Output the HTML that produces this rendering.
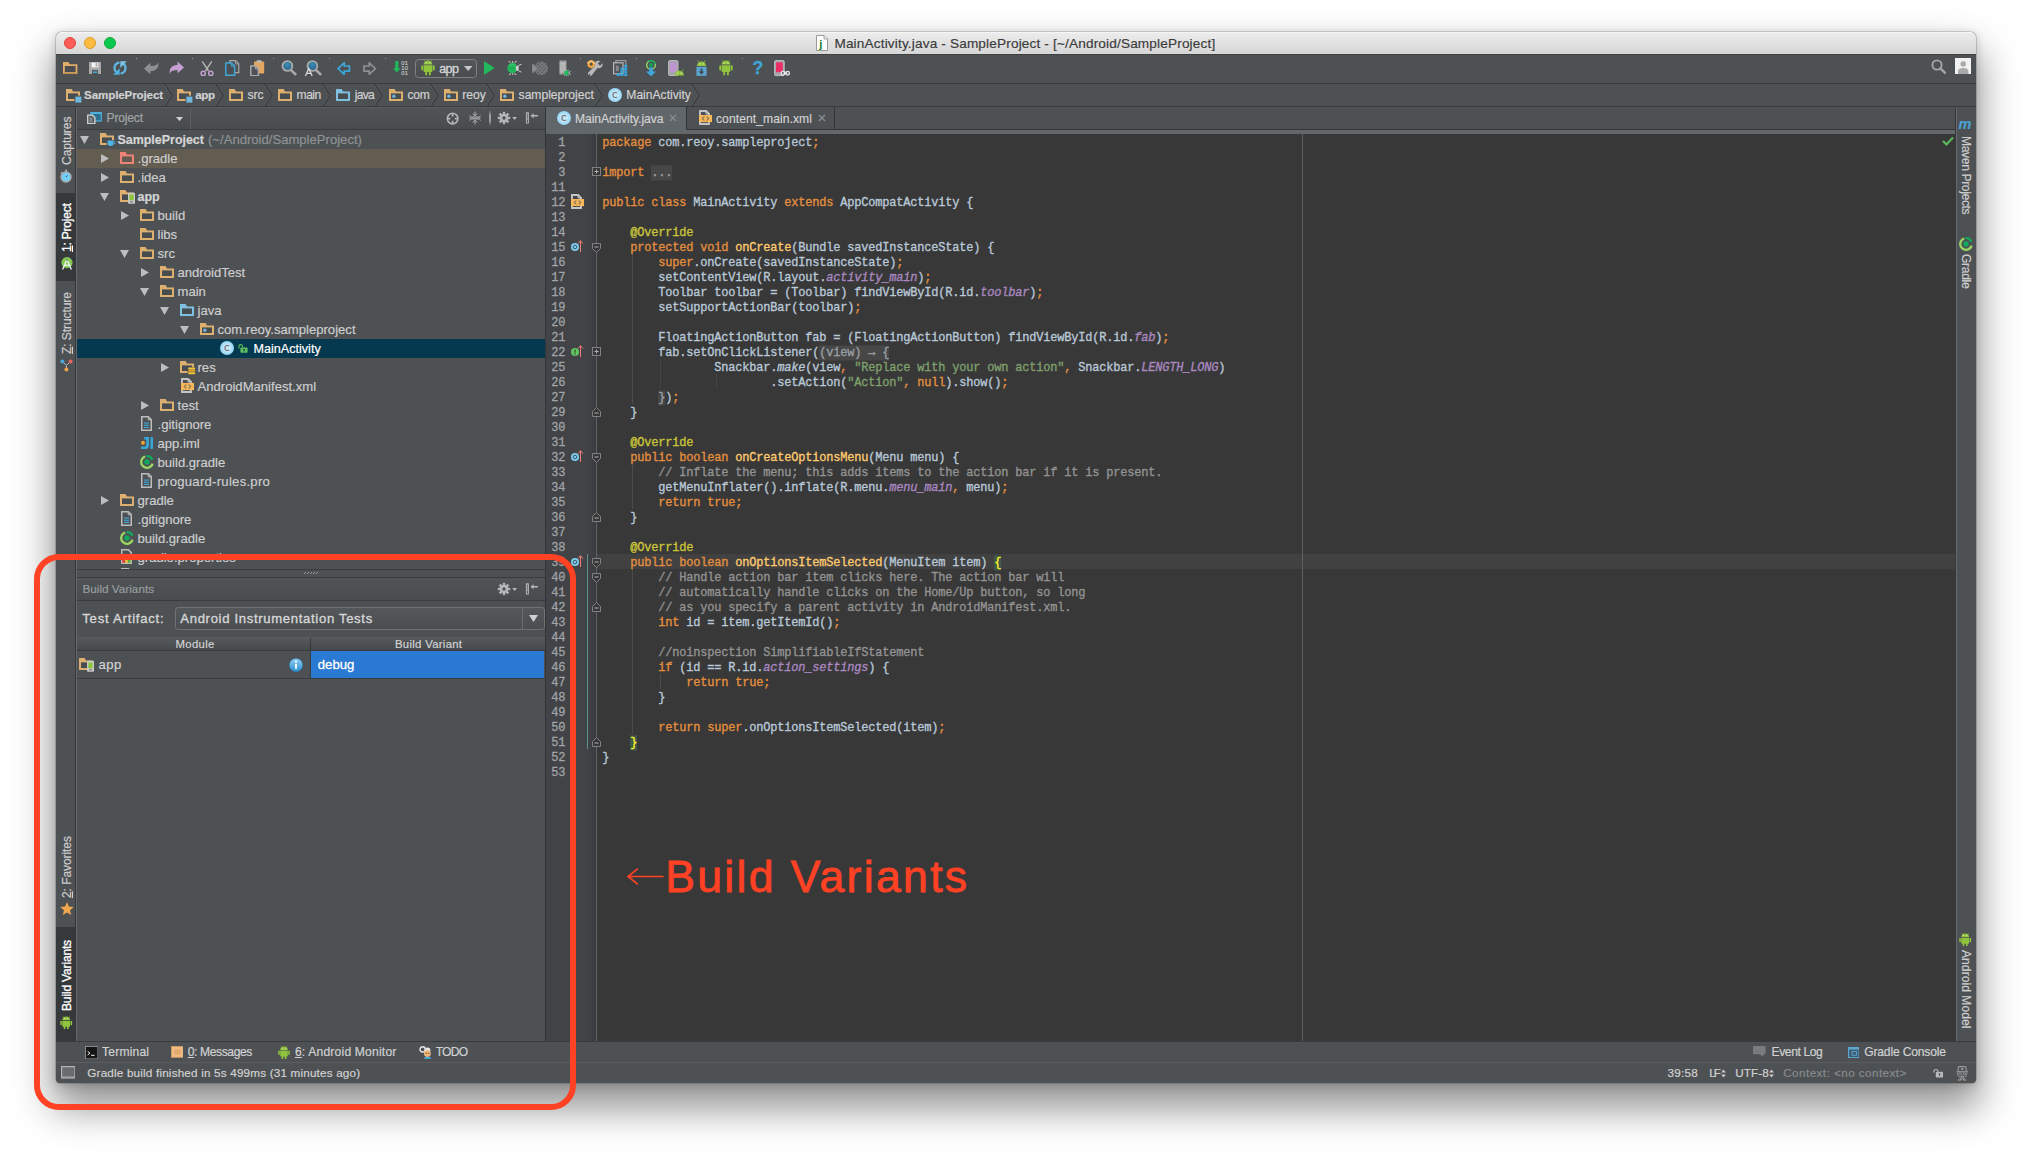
<!DOCTYPE html>
<html><head><meta charset="utf-8"><title>MainActivity.java - SampleProject</title>
<style>
html,body{margin:0;padding:0;background:#fff;}
body{width:2032px;height:1163px;overflow:hidden;position:relative;font-family:"Liberation Sans",sans-serif;}
div,span,svg{position:absolute;box-sizing:border-box;}
.t{white-space:pre;line-height:1;-webkit-text-stroke:0.18px;}
.t span,.c span{position:static;}
.m{font-family:"Liberation Mono",monospace;}
.c{white-space:pre;font-family:"Liberation Mono",monospace;font-size:12px;letter-spacing:-0.2px;line-height:15px;height:15px;color:#bac9d8;transform-origin:0 50%;transform:scaleY(1.08);-webkit-text-stroke:0.32px;}
.k{color:#e58f3e}.s{color:#7fa06d}.cm{color:#939393}.an{color:#cbc53a}.f{color:#aa88c0;font-style:italic}.fn{color:#ffcb6e}
.ln{white-space:pre;font-family:"Liberation Mono",monospace;font-size:12px;letter-spacing:-0.2px;line-height:15px;height:15px;color:#a2a5a7;text-align:right;width:30px;transform-origin:100% 50%;transform:scaleY(1.08);-webkit-text-stroke:0.25px;}
.v{white-space:pre;line-height:1;transform-origin:0 0;-webkit-text-stroke:0.18px;}
u{text-decoration:underline;text-underline-offset:1px;}
</style></head><body>
<!-- parts_chrome -->
<div style="left:56px;top:31.5px;width:1920px;height:1051.5px;background:#4d5154;border-radius:5px 5px 4px 4px;box-shadow:0 22px 38px 4px rgba(0,0,0,0.42),0 0 0 0.5px rgba(0,0,0,0.28),0 2px 10px rgba(0,0,0,0.18);"></div>
<div style="left:56px;top:31.5px;width:1920px;height:22.5px;border-radius:5px 5px 0 0;background:linear-gradient(#ececec,#d6d6d6);border-top:1px solid #f6f6f6;"></div>
<div style="left:64px;top:37px;width:12px;height:12px;background:#fd5c58;border-radius:50%;border:0.5px solid #df423f;"></div>
<div style="left:84px;top:37px;width:12px;height:12px;background:#fdbc3f;border-radius:50%;border:0.5px solid #dd9d27;"></div>
<div style="left:104px;top:37px;width:12px;height:12px;background:#0bc84f;border-radius:50%;border:0.5px solid #11a93d;"></div>
<svg style="left:816px;top:35px;" width="12" height="16" viewBox="0 0 12 16"><path d="M0.5 0.5H8L11.5 4V15.5H0.5Z" fill="#fdfdfd" stroke="#9a9a9a" stroke-width="1"/><path d="M8 0.5V4H11.5" fill="#e4e4e4" stroke="#9a9a9a" stroke-width="0.8"/><text x="3.2" y="12.6" font-family="Liberation Sans" font-weight="bold" font-size="11" fill="#0b7a1a">j</text></svg>
<div class="t" style="left:834.4px;top:36.70px;font-size:13.6px;color:#3c3c3c;letter-spacing:0.162px;">MainActivity.java - SampleProject - [~/Android/SampleProject]</div>
<div style="left:56px;top:54px;width:1920px;height:1px;background:#3e4143;"></div>
<div style="left:56px;top:83px;width:1920px;height:1px;background:#393c3e;"></div>
<div style="left:56px;top:106px;width:1920px;height:1px;background:#393c3e;"></div>
<div style="left:56px;top:1041px;width:1920px;height:1px;background:#393c3e;"></div>
<div style="left:56px;top:1062px;width:1920px;height:1px;background:#5b5e60;"></div>
<svg style="left:63px;top:62px;" width="15" height="12" viewBox="0 0 15 12"><path d="M0 0H5.2L7 2.2H14.4V12H0Z" fill="#e0ac68"/><rect x="1.8" y="4" width="10.8" height="6.2" fill="#4a4e52"/><rect x="0" y="11" width="14.4" height="1" fill="#c98f4a"/></svg>
<svg style="left:89px;top:62px;" width="12" height="12" viewBox="0 0 12 12"><path d="M0 0H12V12H0Z" fill="#a9a9a9"/><rect x="2.6" y="0.6" width="6.8" height="4.8" fill="#f4f4f4"/><rect x="6.6" y="1" width="1.6" height="3.6" fill="#a9a9a9"/><rect x="3" y="8" width="6" height="4" fill="#55585b"/><rect x="4" y="9.4" width="4" height="1.6" fill="#3fa6d6"/></svg>
<svg style="left:113px;top:61px;" width="14" height="14" viewBox="0 0 14 14"><path d="M6.4 1.3Q1.3 2.4 1.5 7.4Q1.7 9.7 3.5 11.3" fill="none" stroke="#5fb6e2" stroke-width="2.3"/><path d="M0.2 13.7H6.7V7.3Z" fill="#4eaee0"/><path d="M7.6 12.7Q12.7 11.6 12.5 6.6Q12.3 4.3 10.5 2.7" fill="none" stroke="#5fb6e2" stroke-width="2.3"/><path d="M13.8 0.3H7.3V6.7Z" fill="#7cc4e8"/></svg>
<div style="left:136px;top:58px;width:1px;height:1px;background:#9a9d9f;"></div>
<svg style="left:144px;top:62px;" width="15" height="13" viewBox="0 0 15 13"><path d="M0 6.6L6.4 0.8V4Q13.6 4 14.4 0Q15.4 8.6 6.4 9.2V12.4Z" fill="#8d8f91"/></svg>
<svg style="left:168.5px;top:61px;" width="15" height="13" viewBox="0 0 15 13"><g transform="translate(15,13) scale(-1,-1)"><path d="M0 6.6L6.4 0.8V4Q13.6 4 14.4 0Q15.4 8.6 6.4 9.2V12.4Z" fill="#c79fd4"/></g></svg>
<div style="left:192px;top:58px;width:1px;height:1px;background:#9a9d9f;"></div>
<svg style="left:200px;top:60.5px;" width="14" height="15.5" viewBox="0 0 14 15.5"><path d="M2.2 0.4L8.6 10M11.8 0.4L5.4 10" stroke="#b4b4b4" stroke-width="1.4" fill="none"/><circle cx="3.2" cy="12.4" r="2.1" fill="none" stroke="#c79fd4" stroke-width="1.5"/><circle cx="10.8" cy="12.4" r="2.1" fill="none" stroke="#c79fd4" stroke-width="1.5"/></svg>
<svg style="left:225px;top:60px;" width="14.5" height="16" viewBox="0 0 14.5 16"><path d="M4.8 0.6H10.6L13.8 3.8V12.6H4.8Z" fill="none" stroke="#a9a9a9" stroke-width="1.2"/><path d="M10.4 0.8V4H13.6" fill="none" stroke="#a9a9a9" stroke-width="0.9"/><path d="M0.8 3H6.6L9.6 6V15.2H0.8Z" fill="#4b5054" stroke="#3fa6d6" stroke-width="1.5"/><path d="M6.4 3.2V6.2H9.4" fill="none" stroke="#3fa6d6" stroke-width="1"/></svg>
<svg style="left:250px;top:59.5px;" width="14.5" height="16.5" viewBox="0 0 14.5 16.5"><rect x="4" y="1.6" width="10.2" height="12" rx="0.8" fill="#e2a660"/><rect x="6.6" y="0.2" width="5" height="2.4" rx="0.6" fill="#bdbdbd"/><path d="M0.8 6H5.6L8.4 8.8V15.8H0.8Z" fill="#4d5154" stroke="#a9a9a9" stroke-width="1.5"/><path d="M5.4 6.2V9H8.2" fill="none" stroke="#a9a9a9" stroke-width="1"/></svg>
<div style="left:273px;top:58px;width:1px;height:1px;background:#9a9d9f;"></div>
<svg style="left:281px;top:59.6px;" width="16" height="16" viewBox="0 0 16 16"><defs><radialGradient id="lens1" cx="0.5" cy="0.35" r="0.7"><stop offset="0" stop-color="#3c8cb6"/><stop offset="1" stop-color="#265d7c"/></radialGradient></defs><path d="M9.6 9.6L14.4 14.2" stroke="#a9a9a9" stroke-width="2.6" stroke-linecap="round"/><circle cx="6.4" cy="6" r="4.9" fill="url(#lens1)" stroke="#a9a9a9" stroke-width="1.9"/></svg>
<svg style="left:306px;top:59.6px;overflow:visible;" width="16" height="16" viewBox="0 0 16 16"><defs><radialGradient id="lens2" cx="0.5" cy="0.35" r="0.7"><stop offset="0" stop-color="#3c8cb6"/><stop offset="1" stop-color="#265d7c"/></radialGradient></defs><path d="M9.6 9.6L14.4 14.2" stroke="#a9a9a9" stroke-width="2.6" stroke-linecap="round"/><circle cx="6.4" cy="6" r="4.9" fill="url(#lens2)" stroke="#a9a9a9" stroke-width="1.9"/><path d="M-0.6 16L2.8 8.4L6.2 16M0.7 13.4H4.9" fill="none" stroke="#d6d6d6" stroke-width="1.3"/></svg>
<div style="left:329px;top:58px;width:1px;height:1px;background:#9a9d9f;"></div>
<svg style="left:337px;top:62px;" width="14" height="13.4" viewBox="0 0 14 13.4"><path d="M1 6.6L7.2 0.8V4H12.4V9.2H7.2V12.4Z" fill="none" stroke="#3fa6d6" stroke-width="1.7" stroke-linejoin="miter"/></svg>
<svg style="left:363px;top:62px;" width="14" height="13.4" viewBox="0 0 14 13.4"><g transform="translate(13.4,0) scale(-1,1)"><path d="M1 6.6L7.2 0.8V4H12.4V9.2H7.2V12.4Z" fill="none" stroke="#8d8f91" stroke-width="1.7" stroke-linejoin="miter"/></g></svg>
<div style="left:385px;top:58px;width:1px;height:1px;background:#9a9d9f;"></div>
<svg style="left:393px;top:60.5px;" width="15" height="15" viewBox="0 0 15 15"><path d="M2.2 0H5.4V7.2H7.6L3.8 11.6L0 7.2H2.2Z" fill="#20b85a"/></svg>
<div class="t" style="left:401.3px;top:60.70px;font-size:5.8px;color:#c4c4c4;letter-spacing:0.2px;">01</div>
<div class="t" style="left:401.3px;top:65.70px;font-size:5.8px;color:#c4c4c4;letter-spacing:0.2px;">10</div>
<div class="t" style="left:401.3px;top:70.70px;font-size:5.8px;color:#c4c4c4;letter-spacing:0.2px;">01</div>
<div style="left:415px;top:59px;width:62px;height:19px;border:1px solid #7e8284;border-radius:3.5px;background:linear-gradient(#53575a,#484c4f);"></div>
<svg style="left:421px;top:60px;" width="14" height="15.5" viewBox="0 0 14 15.5"><path d="M2.6 4.6A4.4 4.2 0 0 1 11.4 4.6Z" fill="#8fc43c"/><path d="M4.2 1.6L3.3 0.2M9.8 1.6L10.7 0.2" stroke="#8fc43c" stroke-width="0.7"/><circle cx="5.1" cy="2.9" r="0.6" fill="#e6efd2"/><circle cx="8.9" cy="2.9" r="0.6" fill="#e6efd2"/><path d="M2.6 5.2H11.4V11.2Q11.4 12 10.6 12H3.4Q2.6 12 2.6 11.2Z" fill="#8fc43c"/><rect x="0.3" y="5.2" width="1.8" height="5.2" rx="0.9" fill="#8fc43c"/><rect x="11.9" y="5.2" width="1.8" height="5.2" rx="0.9" fill="#8fc43c"/><rect x="4.2" y="11" width="1.9" height="4.4" rx="0.9" fill="#8fc43c"/><rect x="7.9" y="11" width="1.9" height="4.4" rx="0.9" fill="#8fc43c"/></svg>
<div class="t" style="left:439.3px;top:63.30px;font-size:12.6px;color:#d6d6d6;-webkit-text-stroke:0.3px #d6d6d6;letter-spacing:-0.711px;">app</div>
<svg style="left:464px;top:66.2px;" width="8.4" height="5" viewBox="0 0 8.4 5"><path d="M0 0H8.4L4.2 5Z" fill="#c8c8c8"/></svg>
<svg style="left:484px;top:61.4px;" width="11" height="14" viewBox="0 0 11 14"><path d="M0 0L10.6 7L0 14Z" fill="#20b85a"/></svg>
<svg style="left:506.5px;top:61px;" width="15" height="14.4" viewBox="0 0 15 14.4"><path d="M1.4 0.4H2.6L3.8 2.4M5.6 0L5.6 2.2M9.8 0.4H8.6L7.4 2.4M1.4 14H2.6L3.8 12M5.6 14.4L5.6 12.2M9.8 14H8.6L7.4 12" stroke="#d4d4d4" stroke-width="0.9" fill="none"/><path d="M14.4 3.4Q12 3.2 11.2 5.6M14.4 11Q12 11.2 11.2 8.8" stroke="#d0d0d0" stroke-width="1" fill="none"/><ellipse cx="5.4" cy="7.2" rx="5" ry="5.1" fill="#20b85a"/><path d="M0.6 7.2H9.6" stroke="#169a4a" stroke-width="0.6"/><path d="M1.6 4.4Q5 2.6 8.6 4" stroke="#4fd68a" stroke-width="0.9" fill="none" opacity="0.6"/><ellipse cx="10.2" cy="7.2" rx="1.5" ry="2.8" fill="#cfcfcf"/></svg>
<svg style="left:531.6px;top:60.6px;" width="16.4" height="15" viewBox="0 0 16.4 15"><defs><pattern id="hat" width="2.8" height="2.8" patternUnits="userSpaceOnUse" patternTransform="rotate(45 0 0)"><rect width="2.8" height="2.8" fill="#808386"/><rect x="0.3" y="0.3" width="1.7" height="1.7" fill="#505457"/></pattern></defs><circle cx="9.2" cy="7.4" r="6.9" fill="url(#hat)"/><path d="M0.2 2.2L5.6 7.4L0.2 12.6Z" fill="#8c8f91"/></svg>
<svg style="left:558.6px;top:59.6px;" width="12" height="16" viewBox="0 0 12 16"><rect x="0.4" y="0.4" width="7" height="14.2" rx="1" fill="#a6a8aa"/><rect x="1.7" y="2.8" width="4.4" height="9.4" fill="#cdcdcd"/><rect x="2.2" y="3.4" width="3.9" height="8.8" fill="#b4b4b4"/><circle cx="3.9" cy="1.6" r="0.5" fill="#555"/><circle cx="3.9" cy="13.5" r="0.6" fill="#666"/><rect x="5.3" y="10.5" width="4.4" height="4.8" rx="1.2" fill="#20b85a"/><path d="M11.6 11.4Q10 11.6 10 12.9Q10 14.2 11.6 14.4" stroke="#d4d4d4" stroke-width="0.9" fill="none"/><path d="M5.4 10.2h0.8M7.1 10.2h0.8M8.8 10.2h0.8M5.4 15.6h0.8M7.1 15.6h0.8M8.8 15.6h0.8" stroke="#e4e4e4" stroke-width="0.8"/></svg>
<div style="left:580px;top:58px;width:1px;height:1px;background:#9a9d9f;"></div>
<svg style="left:586.6px;top:60.2px;" width="17" height="16" viewBox="0 0 17 16"><path d="M15.6 3.2L13 5.8L10.8 3.6L13.4 1Q10.4 0 8.6 2Q7.2 3.8 8 5.8L1.6 12.2Q0.4 13.6 1.2 15L2.6 13.8L3.6 14.8L2.6 16Q4 16.2 5 15L10.4 8Q12.6 8.8 14.4 7.2Q16.2 5.4 15.6 3.2Z" fill="#b9b9b9"/><path d="M4.2 -0.2L7.9 1.9V6.3L4.2 8.4L0.5 6.3V1.9Z" fill="#efa43e"/><path d="M4.2 -0.2L7.9 1.9V4.1H0.5V1.9Z" fill="#f6bb62"/><circle cx="4.2" cy="4.1" r="1.6" fill="#4d5154"/></svg>
<svg style="left:612.8px;top:59.6px;" width="15" height="16.4" viewBox="0 0 15 16.4"><rect x="2.8" y="0.6" width="10" height="9" fill="none" stroke="#9a9c9e" stroke-width="1.2"/><rect x="0.6" y="2.8" width="9.4" height="11" fill="#4d5154" stroke="#b8b8b8" stroke-width="1.2"/><rect x="2.8" y="5.6" width="3" height="5.6" fill="#85888a"/><rect x="3.6" y="13.5" width="3" height="2.5" fill="#35a7e0"/><rect x="7.4" y="13.5" width="3" height="2.5" fill="#35a7e0"/><rect x="7.4" y="10.6" width="3" height="2.5" fill="#35a7e0"/><rect x="7.4" y="7.7" width="3" height="2.5" fill="#35a7e0"/><rect x="11.2" y="13.5" width="3" height="2.5" fill="#35a7e0"/><rect x="11.2" y="10.6" width="3" height="2.5" fill="#35a7e0"/><rect x="11.2" y="7.7" width="3" height="2.5" fill="#35a7e0"/><rect x="11.2" y="4.8" width="3" height="2.5" fill="#35a7e0"/></svg>
<div style="left:636px;top:58px;width:1px;height:1px;background:#9a9d9f;"></div>
<svg style="left:644px;top:59.6px;" width="14" height="16.8" viewBox="0 0 14 16.8"><circle cx="7" cy="5" r="4.3" fill="none" stroke="#8fd36a" stroke-width="1.5"/><path d="M4.6 1.4A4.3 4.3 0 0 1 11.2 4" fill="none" stroke="#12a55a" stroke-width="1.5"/><circle cx="7" cy="5" r="2" fill="#12a55a"/><path d="M5 7.4H9V11.4H12L7 16.6L2 11.4H5Z" fill="#3fa6d6"/></svg>
<svg style="left:667.6px;top:60px;" width="17" height="16.4" viewBox="0 0 17 16.4"><rect x="0.6" y="0.6" width="9.4" height="15" rx="1.2" fill="#a3a5a7" stroke="#c6c6c6" stroke-width="0.9"/><rect x="2" y="2.6" width="6.6" height="9.6" fill="#c194d4"/><g transform="translate(6.4,9.4)"><rect x="-0.6" y="-0.8" width="11.2" height="8" fill="#4d5154" opacity="0"/><path d="M0.4 6A4.6 4.6 0 0 1 9.6 6Z" fill="#8fc43c"/><path d="M2.4 2.4L1.4 0.4M7.6 2.4L8.6 0.4" stroke="#8fc43c" stroke-width="0.8"/><circle cx="3.2" cy="3.8" r="0.65" fill="#e6efd2"/><circle cx="6.8" cy="3.8" r="0.65" fill="#e6efd2"/></g></svg>
<svg style="left:695.6px;top:59.6px;" width="11" height="16.4" viewBox="0 0 11 16.4"><g transform="translate(0.5,0)"><path d="M0.4 6A4.6 4.6 0 0 1 9.6 6Z" fill="#8fc43c"/><path d="M2.4 2.4L1.4 0.4M7.6 2.4L8.6 0.4" stroke="#8fc43c" stroke-width="0.8"/><circle cx="3.2" cy="3.8" r="0.65" fill="#e6efd2"/><circle cx="6.8" cy="3.8" r="0.65" fill="#e6efd2"/></g><rect x="0.4" y="6.8" width="10.2" height="9" fill="#5da3cf"/><path d="M4.6 8.4H6.4V11.4H8.4L5.5 14.6L2.6 11.4H4.6Z" fill="#3b4a55"/></svg>
<svg style="left:719px;top:60.2px;" width="14" height="15.5" viewBox="0 0 14 15.5"><path d="M2.6 4.6A4.4 4.2 0 0 1 11.4 4.6Z" fill="#8fc43c"/><path d="M4.2 1.6L3.3 0.2M9.8 1.6L10.7 0.2" stroke="#8fc43c" stroke-width="0.7"/><circle cx="5.1" cy="2.9" r="0.6" fill="#e6efd2"/><circle cx="8.9" cy="2.9" r="0.6" fill="#e6efd2"/><path d="M2.6 5.2H11.4V11.2Q11.4 12 10.6 12H3.4Q2.6 12 2.6 11.2Z" fill="#8fc43c"/><rect x="0.3" y="5.2" width="1.8" height="5.2" rx="0.9" fill="#8fc43c"/><rect x="11.9" y="5.2" width="1.8" height="5.2" rx="0.9" fill="#8fc43c"/><rect x="4.2" y="11" width="1.9" height="4.4" rx="0.9" fill="#8fc43c"/><rect x="7.9" y="11" width="1.9" height="4.4" rx="0.9" fill="#8fc43c"/></svg>
<div style="left:742px;top:58px;width:1px;height:1px;background:#9a9d9f;"></div>
<div class="t" style="left:752.4px;top:60.25px;font-size:17.5px;color:#3fa6d6;font-weight:bold;-webkit-text-stroke:0.3px #3fa6d6;">?</div>
<svg style="left:773.6px;top:60px;" width="17" height="16.6" viewBox="0 0 17 16.6"><rect x="0.6" y="0.6" width="9.6" height="15" rx="1.2" fill="#a3a5a7" stroke="#c6c6c6" stroke-width="0.9"/><rect x="2" y="2.4" width="6.8" height="9.8" fill="#ee2c68"/><circle cx="9" cy="13.2" r="1.9" fill="#777" stroke="#f2f2f2" stroke-width="1.1"/><circle cx="13.6" cy="13.2" r="1.9" fill="#777" stroke="#f2f2f2" stroke-width="1.1"/><rect x="9.6" y="12.5" width="3.4" height="1.4" fill="#f2f2f2"/></svg>
<svg style="left:1931px;top:59.4px;" width="16" height="15.4" viewBox="0 0 16 15.4"><path d="M9.4 9.4L14 13.8" stroke="#a4a6a8" stroke-width="2.4" stroke-linecap="round"/><circle cx="6" cy="6" r="4.6" fill="none" stroke="#a4a6a8" stroke-width="1.9"/></svg>
<svg style="left:1955px;top:58.2px;" width="16.4" height="16" viewBox="0 0 16.4 16"><rect width="16.4" height="16" fill="#f1f1f1"/><circle cx="8.2" cy="6" r="2.7" fill="#a9a9a9"/><path d="M3 16V13.4Q3 10 8.2 10Q13.4 10 13.4 13.4V16Z" fill="#a9a9a9"/></svg>
<svg style="left:66px;top:89px;" width="16" height="14" viewBox="0 0 16 14"><path d="M0 0H5.6L7 2.4H14V12H0Z" fill="#deb06f"/><rect x="2" y="4.4" width="10" height="5.6" fill="#474c50"/><rect x="8.4" y="6.6" width="7" height="7" fill="#4d5154"/><rect x="9.4" y="7.6" width="6" height="6" fill="#6fb7dc"/></svg>
<div class="t" style="left:84.1px;top:89.20px;font-size:11.6px;color:#d2d2d2;font-weight:bold;letter-spacing:-0.132px;">SampleProject</div>
<svg style="left:163.5px;top:83.5px;" width="9" height="23" viewBox="0 0 9 23"><path d="M0.5 0L8 11.5L0.5 23" fill="none" stroke="#37393b" stroke-width="1.1"/><path d="M-0.7 0L6.8 11.5L-0.7 23" fill="none" stroke="#5a5e61" stroke-width="0.8"/></svg>
<svg style="left:177.3px;top:89px;" width="16" height="14" viewBox="0 0 16 14"><path d="M0 0H5.6L7 2.4H14V12H0Z" fill="#deb06f"/><rect x="2" y="4.4" width="10" height="5.6" fill="#474c50"/><rect x="8.4" y="6.6" width="7" height="7" fill="#4d5154"/><rect x="9.4" y="7.6" width="6" height="6" fill="#6fb7dc"/></svg>
<div class="t" style="left:195.2px;top:89.20px;font-size:11.6px;color:#d2d2d2;font-weight:bold;letter-spacing:-0.411px;">app</div>
<svg style="left:214.5px;top:83.5px;" width="9" height="23" viewBox="0 0 9 23"><path d="M0.5 0L8 11.5L0.5 23" fill="none" stroke="#37393b" stroke-width="1.1"/><path d="M-0.7 0L6.8 11.5L-0.7 23" fill="none" stroke="#5a5e61" stroke-width="0.8"/></svg>
<svg style="left:229.2px;top:89px;" width="14" height="12" viewBox="0 0 14 12"><path d="M0 0H5.6L7 2.4H14V12H0Z" fill="#deb06f"/><rect x="2" y="4.4" width="10" height="5.6" fill="#474c50"/></svg>
<div class="t" style="left:247.6px;top:88.95px;font-size:12.1px;color:#d2d2d2;letter-spacing:-0.115px;">src</div>
<svg style="left:263.9px;top:83.5px;" width="9" height="23" viewBox="0 0 9 23"><path d="M0.5 0L8 11.5L0.5 23" fill="none" stroke="#37393b" stroke-width="1.1"/><path d="M-0.7 0L6.8 11.5L-0.7 23" fill="none" stroke="#5a5e61" stroke-width="0.8"/></svg>
<svg style="left:278.2px;top:89px;" width="14" height="12" viewBox="0 0 14 12"><path d="M0 0H5.6L7 2.4H14V12H0Z" fill="#deb06f"/><rect x="2" y="4.4" width="10" height="5.6" fill="#474c50"/></svg>
<div class="t" style="left:296.6px;top:88.95px;font-size:12.1px;color:#d2d2d2;letter-spacing:-0.542px;">main</div>
<svg style="left:321.6px;top:83.5px;" width="9" height="23" viewBox="0 0 9 23"><path d="M0.5 0L8 11.5L0.5 23" fill="none" stroke="#37393b" stroke-width="1.1"/><path d="M-0.7 0L6.8 11.5L-0.7 23" fill="none" stroke="#5a5e61" stroke-width="0.8"/></svg>
<svg style="left:336.3px;top:89px;" width="14" height="12" viewBox="0 0 14 12"><path d="M0 0H5.6L7 2.4H14V12H0Z" fill="#7ec0e2"/><rect x="2" y="4.4" width="10" height="5.6" fill="#474c50"/></svg>
<div class="t" style="left:354.7px;top:88.95px;font-size:12.1px;color:#d2d2d2;letter-spacing:-0.699px;">java</div>
<svg style="left:374.4px;top:83.5px;" width="9" height="23" viewBox="0 0 9 23"><path d="M0.5 0L8 11.5L0.5 23" fill="none" stroke="#37393b" stroke-width="1.1"/><path d="M-0.7 0L6.8 11.5L-0.7 23" fill="none" stroke="#5a5e61" stroke-width="0.8"/></svg>
<svg style="left:388.7px;top:89px;" width="14" height="12" viewBox="0 0 14 12"><path d="M0 0H5.6L7 2.4H14V12H0Z" fill="#deb06f"/><rect x="2" y="4.4" width="10" height="5.6" fill="#474c50"/><circle cx="4.9" cy="7.2" r="1.7" fill="#6db5dd"/></svg>
<div class="t" style="left:407.6px;top:88.95px;font-size:12.1px;color:#d2d2d2;letter-spacing:-0.279px;">com</div>
<svg style="left:429.7px;top:83.5px;" width="9" height="23" viewBox="0 0 9 23"><path d="M0.5 0L8 11.5L0.5 23" fill="none" stroke="#37393b" stroke-width="1.1"/><path d="M-0.7 0L6.8 11.5L-0.7 23" fill="none" stroke="#5a5e61" stroke-width="0.8"/></svg>
<svg style="left:444.1px;top:89px;" width="14" height="12" viewBox="0 0 14 12"><path d="M0 0H5.6L7 2.4H14V12H0Z" fill="#deb06f"/><rect x="2" y="4.4" width="10" height="5.6" fill="#474c50"/><circle cx="4.9" cy="7.2" r="1.7" fill="#6db5dd"/></svg>
<div class="t" style="left:462.3px;top:88.95px;font-size:12.1px;color:#d2d2d2;letter-spacing:-0.013px;">reoy</div>
<svg style="left:485.8px;top:83.5px;" width="9" height="23" viewBox="0 0 9 23"><path d="M0.5 0L8 11.5L0.5 23" fill="none" stroke="#37393b" stroke-width="1.1"/><path d="M-0.7 0L6.8 11.5L-0.7 23" fill="none" stroke="#5a5e61" stroke-width="0.8"/></svg>
<svg style="left:500px;top:89px;" width="14" height="12" viewBox="0 0 14 12"><path d="M0 0H5.6L7 2.4H14V12H0Z" fill="#deb06f"/><rect x="2" y="4.4" width="10" height="5.6" fill="#474c50"/><circle cx="4.9" cy="7.2" r="1.7" fill="#6db5dd"/></svg>
<div class="t" style="left:518.6px;top:88.95px;font-size:12.1px;color:#d2d2d2;letter-spacing:-0.002px;">sampleproject</div>
<svg style="left:593.7px;top:83.5px;" width="9" height="23" viewBox="0 0 9 23"><path d="M0.5 0L8 11.5L0.5 23" fill="none" stroke="#37393b" stroke-width="1.1"/><path d="M-0.7 0L6.8 11.5L-0.7 23" fill="none" stroke="#5a5e61" stroke-width="0.8"/></svg>
<svg style="left:607.8px;top:88px;" width="14" height="14" viewBox="0 0 14 14"><defs><radialGradient id="cg1" cx="0.5" cy="0.5" r="0.5"><stop offset="0.45" stop-color="#c3e8fa"/><stop offset="1" stop-color="#92d3f3"/></radialGradient></defs><circle cx="7" cy="7" r="7" fill="url(#cg1)"/><path d="M9.2 5.2Q8.4 4.5 7.2 4.5Q4.9 4.5 4.9 7Q4.9 9.5 7.2 9.5Q8.4 9.5 9.2 8.8" fill="none" stroke="#75676c" stroke-width="1.05"/></svg>
<div class="t" style="left:626.3px;top:88.95px;font-size:12.1px;color:#d2d2d2;letter-spacing:0.005px;">MainActivity</div>
<svg style="left:690.8px;top:83.5px;" width="9" height="23" viewBox="0 0 9 23"><path d="M0.5 0L8 11.5L0.5 23" fill="none" stroke="#37393b" stroke-width="1.1"/><path d="M-0.7 0L6.8 11.5L-0.7 23" fill="none" stroke="#5a5e61" stroke-width="0.8"/></svg>
<svg style="left:85px;top:1046px;" width="13.4" height="13.4" viewBox="0 0 13.4 13.4"><rect x="0.5" y="0.5" width="12.4" height="12.4" fill="#151515" stroke="#8a8a8a" stroke-width="1"/><path d="M2.6 5.4L5 7.2L2.6 9" fill="none" stroke="#f0f0f0" stroke-width="1"/><rect x="6" y="8.8" width="3.6" height="1" fill="#f0f0f0"/></svg>
<div class="t" style="left:102.1px;top:1046.45px;font-size:12.1px;color:#d2d2d2;letter-spacing:0.168px;">Terminal</div>
<svg style="left:170.6px;top:1046.4px;" width="12.8" height="11.8" viewBox="0 0 12.8 11.8"><rect x="0.5" y="0.5" width="11.8" height="10.8" fill="#f1bd84" stroke="#c79a66" stroke-width="1"/><rect x="3" y="3.4" width="6.6" height="5" fill="#e2a86c"/></svg>
<div class="t" style="left:187.7px;top:1046.45px;font-size:12.1px;color:#d2d2d2;letter-spacing:-0.390px;"><u>0</u>: Messages</div>
<svg style="left:278.2px;top:1045.6px;" width="12" height="13.6" viewBox="0 0 14 15.5"><path d="M2.6 4.6A4.4 4.2 0 0 1 11.4 4.6Z" fill="#8fc43c"/><path d="M4.2 1.6L3.3 0.2M9.8 1.6L10.7 0.2" stroke="#8fc43c" stroke-width="0.7"/><circle cx="5.1" cy="2.9" r="0.6" fill="#e6efd2"/><circle cx="8.9" cy="2.9" r="0.6" fill="#e6efd2"/><path d="M2.6 5.2H11.4V11.2Q11.4 12 10.6 12H3.4Q2.6 12 2.6 11.2Z" fill="#8fc43c"/><rect x="0.3" y="5.2" width="1.8" height="5.2" rx="0.9" fill="#8fc43c"/><rect x="11.9" y="5.2" width="1.8" height="5.2" rx="0.9" fill="#8fc43c"/><rect x="4.2" y="11" width="1.9" height="4.4" rx="0.9" fill="#8fc43c"/><rect x="7.9" y="11" width="1.9" height="4.4" rx="0.9" fill="#8fc43c"/></svg>
<div class="t" style="left:294.9px;top:1046.45px;font-size:12.1px;color:#d2d2d2;letter-spacing:0.194px;"><u>6</u>: Android Monitor</div>
<svg style="left:418.6px;top:1045.6px;" width="14" height="13.6" viewBox="0 0 14 13.6"><circle cx="3.6" cy="3.4" r="2.6" fill="none" stroke="#e8e8e8" stroke-width="1.4"/><circle cx="8.6" cy="4.4" r="2.8" fill="#e6e6e6"/><circle cx="8.4" cy="7.6" r="3.4" fill="#f3b77a"/><rect x="5.4" y="11" width="6.4" height="2.4" rx="0.8" fill="#3fa6d6"/><rect x="6.6" y="6.8" width="1.4" height="1" fill="#6a4a2a"/><rect x="9" y="6.8" width="1.4" height="1" fill="#6a4a2a"/></svg>
<div class="t" style="left:435.7px;top:1046.45px;font-size:12.1px;color:#d2d2d2;letter-spacing:-0.745px;">TODO</div>
<svg style="left:1752.6px;top:1046.4px;" width="13" height="11" viewBox="0 0 13 11"><path d="M1 0H11.4Q12.6 0 12.6 1.2V7Q12.6 8.2 11.4 8.2H10.6L10.2 10.8L7 8.2H1Q0 8.2 0 7V1.2Q0 0 1 0Z" fill="#797c7f"/></svg>
<div class="t" style="left:1771.5px;top:1046.15px;font-size:12.1px;color:#d2d2d2;letter-spacing:-0.399px;">Event Log</div>
<svg style="left:1847.6px;top:1047px;" width="11.6" height="11.2" viewBox="0 0 11.6 11.2"><rect x="0.6" y="0.6" width="10.4" height="10" fill="#3d5a6c" stroke="#5aa6d0" stroke-width="1.2"/><rect x="0.6" y="0.6" width="10.4" height="2" fill="#5aa6d0"/><rect x="4" y="4.6" width="4.6" height="3.6" fill="none" stroke="#5aa6d0" stroke-width="1"/></svg>
<div class="t" style="left:1864.2px;top:1046.15px;font-size:12.1px;color:#d2d2d2;letter-spacing:-0.167px;">Gradle Console</div>
<svg style="left:60.6px;top:1066px;" width="14.6" height="13.4" viewBox="0 0 14.6 13.4"><rect x="0.6" y="0.6" width="13.4" height="10.6" fill="#6a6d6f" stroke="#b5b5b5" stroke-width="1.2"/><rect x="0" y="12.4" width="14.6" height="1" fill="#b5b5b5"/></svg>
<div class="t" style="left:87.3px;top:1066.95px;font-size:11.7px;color:#d2d2d2;letter-spacing:0.185px;">Gradle build finished in 5s 499ms (31 minutes ago)</div>
<div class="t" style="left:1667.4px;top:1067.15px;font-size:11.7px;color:#d2d2d2;letter-spacing:0.305px;">39:58</div>
<div class="t" style="left:1709.3px;top:1067.15px;font-size:11.7px;color:#d2d2d2;letter-spacing:-2.054px;">LF</div>
<svg style="left:1721.4px;top:1068.6px;" width="5" height="9" viewBox="0 0 5 9"><path d="M0 3.6L2.5 0.6L5 3.6ZM0 5.4L2.5 8.4L5 5.4Z" fill="#c6c6c6"/></svg>
<div class="t" style="left:1735.3px;top:1067.15px;font-size:11.7px;color:#d2d2d2;letter-spacing:0.063px;">UTF-8</div>
<svg style="left:1769.2px;top:1068.6px;" width="5" height="9" viewBox="0 0 5 9"><path d="M0 3.6L2.5 0.6L5 3.6ZM0 5.4L2.5 8.4L5 5.4Z" fill="#c6c6c6"/></svg>
<div class="t" style="left:1783.2px;top:1067.15px;font-size:11.7px;color:#888c8f;letter-spacing:0.441px;">Context: &lt;no context&gt;</div>
<svg style="left:1933px;top:1068.4px;" width="10.4" height="9.8" viewBox="0 0 10.4 9.8"><path d="M0.9 4.4V3.4Q0.9 1.5 2.9 1.5Q4.9 1.5 4.9 3.4V3.8" fill="none" stroke="#b9b9b9" stroke-width="1.2"/><rect x="2.8" y="3.7" width="7.4" height="5.9" rx="1" fill="#b9b9b9"/><path d="M5 5.4H8L7 6.4V8H6V6.4Z" fill="#4d5154"/></svg>
<svg style="left:1956.2px;top:1066.2px;" width="12.4" height="14.4" viewBox="0 0 12.4 14.4"><path d="M2.2 5.4V2Q2.2 0.6 3.6 0.6H8.8Q10.2 0.6 10.2 2V5.4" fill="none" stroke="#9a9d9f" stroke-width="1.1"/><rect x="5.2" y="2" width="2" height="2" fill="#9a9d9f"/><rect x="0.4" y="5.2" width="11.6" height="1.2" fill="#9a9d9f"/><circle cx="4.2" cy="8" r="1.2" fill="none" stroke="#9a9d9f" stroke-width="0.8"/><circle cx="8.2" cy="8" r="1.2" fill="none" stroke="#9a9d9f" stroke-width="0.8"/><path d="M1.4 7Q2 12 6.2 12.4Q10.4 12 11 7" fill="none" stroke="#9a9d9f" stroke-width="0.9"/><ellipse cx="6.2" cy="10.6" rx="1.8" ry="0.9" fill="#9a9d9f"/><path d="M2 14H5.2L4.6 12.6M10.4 14H7.2L7.8 12.6" fill="none" stroke="#b0b0b0" stroke-width="1"/></svg>
<!-- parts_strips -->
<div style="left:75px;top:107px;width:1px;height:934px;background:#35383a;"></div>
<div style="left:76px;top:107px;width:1px;height:934px;background:#66696c;"></div>
<div style="left:56px;top:193px;width:19px;height:88px;background:#35393b;"></div>
<div style="left:56px;top:927px;width:19px;height:114px;background:#35393b;"></div>
<div class="v" style="left:61.36px;top:164.5px;font-size:12.1px;color:#cecece;transform:rotate(-90deg);letter-spacing:-0.085px;">Captures</div>
<div class="v" style="left:61.36px;top:252px;font-size:12.1px;color:#ffffff;transform:rotate(-90deg);-webkit-text-stroke:0.3px #fff;letter-spacing:-0.235px;"><u>1</u>: Project</div>
<div class="v" style="left:61.36px;top:354px;font-size:12.1px;color:#cecece;transform:rotate(-90deg);letter-spacing:-0.110px;"><u>Z</u>: Structure</div>
<div class="v" style="left:61.36px;top:898px;font-size:12.1px;color:#cecece;transform:rotate(-90deg);letter-spacing:-0.110px;"><u>2</u>: Favorites</div>
<div class="v" style="left:61.36px;top:1011.2px;font-size:12.1px;color:#ffffff;transform:rotate(-90deg);-webkit-text-stroke:0.3px #fff;letter-spacing:-0.197px;">Build Variants</div>
<svg style="left:59.4px;top:168.5px;" width="14" height="15" viewBox="0 0 14 15"><rect x="6.3" y="0.6" width="1.6" height="2.6" fill="#b8b8b8"/><path d="M2 3.2L3.6 4.8" stroke="#b8b8b8" stroke-width="1.3"/><circle cx="7" cy="8" r="5" fill="#6fd0f8" stroke="#a9abad" stroke-width="1.5"/><path d="M7 8.2L8.4 6.4" stroke="#4a5560" stroke-width="1"/></svg>
<svg style="left:59.6px;top:256px;" width="14" height="14.5" viewBox="0 0 14 14.5"><circle cx="7" cy="6.6" r="5.6" fill="#84c955"/><path d="M7 3.2L2.6 13.4M7 3.2L11.4 13.4" stroke="#f4f4f4" stroke-width="1.3"/><path d="M4.6 9.8Q7 8.4 9.4 9.8" fill="none" stroke="#f4f4f4" stroke-width="1.1"/><circle cx="7" cy="4" r="1.1" fill="#6d8a5d"/></svg>
<svg style="left:60px;top:359.4px;" width="13" height="13" viewBox="0 0 13 13"><path d="M2.4 2.6L6.4 6.4L10.6 2.6M6.4 6.4V10.6" stroke="#b9b9b9" stroke-width="1" fill="none"/><circle cx="2.4" cy="2.6" r="2" fill="#4aa8dc"/><circle cx="10.6" cy="2.6" r="2" fill="#e9655f"/><circle cx="6.4" cy="10.6" r="2" fill="#f0a24a"/></svg>
<svg style="left:59.8px;top:901.8px;" width="14" height="13.4" viewBox="0 0 14 13.4"><path d="M7 0L8.9 4.6L13.8 5L10 8.2L11.2 13L7 10.4L2.8 13L4 8.2L0.2 5L5.1 4.6Z" fill="#f0a74e"/></svg>
<svg style="left:60.4px;top:1015.6px;" width="12.4" height="13.8" viewBox="0 0 14 15.5"><path d="M2.6 4.6A4.4 4.2 0 0 1 11.4 4.6Z" fill="#8fc43c"/><path d="M4.2 1.6L3.3 0.2M9.8 1.6L10.7 0.2" stroke="#8fc43c" stroke-width="0.7"/><circle cx="5.1" cy="2.9" r="0.6" fill="#e6efd2"/><circle cx="8.9" cy="2.9" r="0.6" fill="#e6efd2"/><path d="M2.6 5.2H11.4V11.2Q11.4 12 10.6 12H3.4Q2.6 12 2.6 11.2Z" fill="#8fc43c"/><rect x="0.3" y="5.2" width="1.8" height="5.2" rx="0.9" fill="#8fc43c"/><rect x="11.9" y="5.2" width="1.8" height="5.2" rx="0.9" fill="#8fc43c"/><rect x="4.2" y="11" width="1.9" height="4.4" rx="0.9" fill="#8fc43c"/><rect x="7.9" y="11" width="1.9" height="4.4" rx="0.9" fill="#8fc43c"/></svg>
<div style="left:1955px;top:107px;width:1px;height:934px;background:#35383a;"></div>
<div style="left:1956px;top:107px;width:1px;height:934px;background:#686b6e;"></div>
<div class="v" style="left:1972.14px;top:136px;font-size:12.1px;color:#cecece;transform:rotate(90deg);letter-spacing:-0.361px;">Maven Projects</div>
<div class="v" style="left:1972.14px;top:254px;font-size:12.1px;color:#cecece;transform:rotate(90deg);letter-spacing:-0.324px;">Gradle</div>
<div class="v" style="left:1972.14px;top:950px;font-size:12.1px;color:#cecece;transform:rotate(90deg);letter-spacing:0.040px;">Android Model</div>
<div class="t" style="left:1958.6px;top:116.75px;font-size:14.5px;color:#4aa0cf;font-weight:bold;font-style:italic;">m</div>
<svg style="left:1958.6px;top:236.6px;" width="14" height="14" viewBox="0 0 14 14"><path d="M12.6 8.6A5.8 5.8 0 1 1 5.2 1.5" fill="none" stroke="#9bd564" stroke-width="2.3"/><path d="M6.4 1.2A5.8 5.8 0 0 1 12.4 4.9" fill="none" stroke="#11a85c" stroke-width="2.3"/><circle cx="7" cy="7" r="2.7" fill="#11a85c"/></svg>
<svg style="left:1959.4px;top:932.6px;" width="12.4" height="13.8" viewBox="0 0 14 15.5"><path d="M2.6 4.6A4.4 4.2 0 0 1 11.4 4.6Z" fill="#8fc43c"/><path d="M4.2 1.6L3.3 0.2M9.8 1.6L10.7 0.2" stroke="#8fc43c" stroke-width="0.7"/><circle cx="5.1" cy="2.9" r="0.6" fill="#e6efd2"/><circle cx="8.9" cy="2.9" r="0.6" fill="#e6efd2"/><path d="M2.6 5.2H11.4V11.2Q11.4 12 10.6 12H3.4Q2.6 12 2.6 11.2Z" fill="#8fc43c"/><rect x="0.3" y="5.2" width="1.8" height="5.2" rx="0.9" fill="#8fc43c"/><rect x="11.9" y="5.2" width="1.8" height="5.2" rx="0.9" fill="#8fc43c"/><rect x="4.2" y="11" width="1.9" height="4.4" rx="0.9" fill="#8fc43c"/><rect x="7.9" y="11" width="1.9" height="4.4" rx="0.9" fill="#8fc43c"/></svg>
<!-- parts_tree -->
<div style="left:77px;top:129px;width:468px;height:1px;background:#393c3e;"></div>
<div style="left:545px;top:107px;width:1px;height:934px;background:#323537;"></div>
<div style="left:77px;top:107px;width:468px;height:22px;background:linear-gradient(#505457,#484c4e);"></div>
<div style="left:77px;top:107px;width:468px;height:1px;background:#585c5f;"></div>
<div class="t" style="left:106.6px;top:111.95px;font-size:12.1px;color:#a2a6a9;letter-spacing:-0.193px;">Project</div>
<div style="left:190px;top:108px;width:1px;height:21px;background:#5c6063;"></div>
<svg style="left:86.8px;top:111.8px;" width="15" height="12.4" viewBox="0 0 15 12.4"><rect x="3.9" y="0.6" width="10.4" height="8.4" fill="#2c6f8f" stroke="#4fb0dc" stroke-width="1.2"/><rect x="3.9" y="0.6" width="10.4" height="1.4" fill="#4fb0dc"/><path d="M0.7 3.2H5.6L7.9 5.5V11.7H0.7Z" fill="#5c6063" stroke="#d2d2d2" stroke-width="1.3"/><rect x="2.6" y="5.6" width="2.6" height="4.6" fill="#85888a"/></svg>
<svg style="left:175.6px;top:117px;" width="7" height="4.2" viewBox="0 0 7 4.2"><path d="M0 0H7L3.5 4.2Z" fill="#d0d0d0"/></svg>
<svg style="left:446.4px;top:111.5px;" width="13.2" height="13.2" viewBox="0 0 13.2 13.2"><circle cx="6.6" cy="6.6" r="5.3" fill="none" stroke="#b4b4b4" stroke-width="1.6"/><path d="M6.6 1.6V4.4M6.6 8.8V11.6M1.6 6.6H4.4M8.8 6.6H11.6" stroke="#b4b4b4" stroke-width="1.8"/></svg>
<svg style="left:468.6px;top:111px;" width="12" height="14" viewBox="0 0 12 14"><rect x="0.6" y="5.3" width="10.8" height="3.4" fill="#8f9294"/><path d="M6 0.6V4.6M3.8 2.6L6 4.8L8.2 2.6M6 13.4V9.4M3.8 11.4L6 9.2L8.2 11.4" fill="none" stroke="#b4b4b4" stroke-width="1"/><path d="M0.4 4.4L1.4 5.3M11.6 4.4L10.6 5.3M0.4 9.6L1.4 8.7M11.6 9.6L10.6 8.7" stroke="#b4b4b4" stroke-width="0.8"/></svg>
<div style="left:489px;top:109.5px;width:2px;height:16px;background:linear-gradient(rgba(150,153,155,0),rgba(165,168,170,0.9) 35%,rgba(165,168,170,0.9) 65%,rgba(150,153,155,0));"></div>
<svg style="left:497px;top:111px;" width="20" height="14" viewBox="0 0 20 14"><rect x="10.80" y="5.80" width="2.4" height="2.4" transform="rotate(0 12.00 7.00)" fill="#b6b6b6"/><rect x="9.34" y="9.34" width="2.4" height="2.4" transform="rotate(45 10.54 10.54)" fill="#b6b6b6"/><rect x="5.80" y="10.80" width="2.4" height="2.4" transform="rotate(90 7.00 12.00)" fill="#b6b6b6"/><rect x="2.26" y="9.34" width="2.4" height="2.4" transform="rotate(135 3.46 10.54)" fill="#b6b6b6"/><rect x="0.80" y="5.80" width="2.4" height="2.4" transform="rotate(180 2.00 7.00)" fill="#b6b6b6"/><rect x="2.26" y="2.26" width="2.4" height="2.4" transform="rotate(225 3.46 3.46)" fill="#b6b6b6"/><rect x="5.80" y="0.80" width="2.4" height="2.4" transform="rotate(270 7.00 2.00)" fill="#b6b6b6"/><rect x="9.34" y="2.26" width="2.4" height="2.4" transform="rotate(315 10.54 3.46)" fill="#b6b6b6"/><circle cx="7" cy="7" r="4.2" fill="#b6b6b6"/><circle cx="7" cy="7" r="1.7" fill="#4d5154"/><path d="M15.2 6.1H20L17.6 8.9Z" fill="#b6b6b6"/></svg>
<svg style="left:525px;top:111.2px;" width="14" height="14" viewBox="0 0 14 14"><rect x="0.9" y="1.2" width="3" height="11.4" rx="0.6" fill="#b6b6b6"/><rect x="1.9" y="2.4" width="1" height="5.6" fill="#6b6e70"/><rect x="1.9" y="8.6" width="1" height="3" fill="#4d5154"/><path d="M5.4 4.7L8.6 2.2V4H13V5.4H8.6V7.2Z" fill="#b6b6b6"/></svg>
<div style="left:77px;top:130px;width:468px;height:439px;overflow:hidden;">
<svg style="left:3px;top:5.5px;" width="9" height="8" viewBox="0 0 9 8"><path d="M0 0H9L4.5 8Z" fill="#bdbdbd"/></svg>
<svg style="left:23px;top:3px;" width="16" height="14" viewBox="0 0 16 14"><path d="M0 0H5.6L7 2.4H14V12H0Z" fill="#deb06f"/><rect x="2" y="4.4" width="10" height="5.6" fill="#474c50"/><rect x="6.6" y="7" width="8.4" height="6.4" fill="#4d5154"/><path d="M7.6 7.6H13.4V10.5Q13.4 13 10.5 13Q7.6 13 7.6 10.5Z" fill="#4fb4e6"/><path d="M13.2 8.4Q15.4 8.4 15.2 9.8Q15 11 13 11" stroke="#4fb4e6" stroke-width="0.9" fill="none"/></svg>
<div class="t" style="left:40.5px;top:3.78px;font-size:12.45px;color:#d6d6d6;font-weight:bold;">SampleProject</div>
<div class="t" style="left:131px;top:2.95px;font-size:13.1px;color:#8f9395;">(~/Android/SampleProject)</div>
<div style="left:0px;top:19px;width:468px;height:19px;background:#625d50;"></div>
<svg style="left:24px;top:24px;" width="8" height="9" viewBox="0 0 8 9"><path d="M0 0L8 4.5L0 9Z" fill="#bdbdbd"/></svg>
<svg style="left:43px;top:21.8px;" width="14" height="12" viewBox="0 0 14 12"><path d="M0 0H5.6L7 2.4H14V12H0Z" fill="#f18277"/><rect x="2" y="4.4" width="10" height="5.6" fill="#625d50"/></svg>
<div class="t" style="left:60.5px;top:21.95px;font-size:13.1px;color:#cecece;">.gradle</div>
<svg style="left:24px;top:43px;" width="8" height="9" viewBox="0 0 8 9"><path d="M0 0L8 4.5L0 9Z" fill="#bdbdbd"/></svg>
<svg style="left:43px;top:40.8px;" width="14" height="12" viewBox="0 0 14 12"><path d="M0 0H5.6L7 2.4H14V12H0Z" fill="#deb06f"/><rect x="2" y="4.4" width="10" height="5.6" fill="#474c50"/></svg>
<div class="t" style="left:60.5px;top:40.95px;font-size:13.1px;color:#cecece;">.idea</div>
<svg style="left:23px;top:62.5px;" width="9" height="8" viewBox="0 0 9 8"><path d="M0 0H9L4.5 8Z" fill="#bdbdbd"/></svg>
<svg style="left:43px;top:59.8px;" width="16" height="14" viewBox="0 0 16 14"><path d="M0 0H5.6L7 2.4H14V12H0Z" fill="#deb06f"/><rect x="2" y="4.4" width="10" height="5.6" fill="#474c50"/><rect x="8" y="2.8" width="7" height="11" rx="1" fill="#c9c9c9"/><rect x="9.3" y="4.6" width="4.4" height="5.6" fill="#8cc43a"/><rect x="10.3" y="11.4" width="2.4" height="1" fill="#555"/></svg>
<div class="t" style="left:60.5px;top:60.77px;font-size:12.45px;color:#d6d6d6;font-weight:bold;">app</div>
<svg style="left:44px;top:81px;" width="8" height="9" viewBox="0 0 8 9"><path d="M0 0L8 4.5L0 9Z" fill="#bdbdbd"/></svg>
<svg style="left:63px;top:78.8px;" width="14" height="12" viewBox="0 0 14 12"><path d="M0 0H5.6L7 2.4H14V12H0Z" fill="#deb06f"/><rect x="2" y="4.4" width="10" height="5.6" fill="#474c50"/></svg>
<div class="t" style="left:80.5px;top:78.95px;font-size:13.1px;color:#cecece;">build</div>
<svg style="left:63px;top:97.8px;" width="14" height="12" viewBox="0 0 14 12"><path d="M0 0H5.6L7 2.4H14V12H0Z" fill="#deb06f"/><rect x="2" y="4.4" width="10" height="5.6" fill="#474c50"/></svg>
<div class="t" style="left:80.5px;top:97.95px;font-size:13.1px;color:#cecece;">libs</div>
<svg style="left:43px;top:119.5px;" width="9" height="8" viewBox="0 0 9 8"><path d="M0 0H9L4.5 8Z" fill="#bdbdbd"/></svg>
<svg style="left:63px;top:116.8px;" width="14" height="12" viewBox="0 0 14 12"><path d="M0 0H5.6L7 2.4H14V12H0Z" fill="#deb06f"/><rect x="2" y="4.4" width="10" height="5.6" fill="#474c50"/></svg>
<div class="t" style="left:80.5px;top:116.95px;font-size:13.1px;color:#cecece;">src</div>
<svg style="left:64px;top:138px;" width="8" height="9" viewBox="0 0 8 9"><path d="M0 0L8 4.5L0 9Z" fill="#bdbdbd"/></svg>
<svg style="left:83px;top:135.8px;" width="14" height="12" viewBox="0 0 14 12"><path d="M0 0H5.6L7 2.4H14V12H0Z" fill="#deb06f"/><rect x="2" y="4.4" width="10" height="5.6" fill="#474c50"/></svg>
<div class="t" style="left:100.5px;top:135.95px;font-size:13.1px;color:#cecece;">androidTest</div>
<svg style="left:63px;top:157.5px;" width="9" height="8" viewBox="0 0 9 8"><path d="M0 0H9L4.5 8Z" fill="#bdbdbd"/></svg>
<svg style="left:83px;top:154.8px;" width="14" height="12" viewBox="0 0 14 12"><path d="M0 0H5.6L7 2.4H14V12H0Z" fill="#deb06f"/><rect x="2" y="4.4" width="10" height="5.6" fill="#474c50"/></svg>
<div class="t" style="left:100.5px;top:154.95px;font-size:13.1px;color:#cecece;">main</div>
<svg style="left:83px;top:176.5px;" width="9" height="8" viewBox="0 0 9 8"><path d="M0 0H9L4.5 8Z" fill="#bdbdbd"/></svg>
<svg style="left:103px;top:173.8px;" width="14" height="12" viewBox="0 0 14 12"><path d="M0 0H5.6L7 2.4H14V12H0Z" fill="#7ec0e2"/><rect x="2" y="4.4" width="10" height="5.6" fill="#474c50"/></svg>
<div class="t" style="left:120.5px;top:173.95px;font-size:13.1px;color:#cecece;">java</div>
<svg style="left:103px;top:195.5px;" width="9" height="8" viewBox="0 0 9 8"><path d="M0 0H9L4.5 8Z" fill="#bdbdbd"/></svg>
<svg style="left:123px;top:192.8px;" width="14" height="12" viewBox="0 0 14 12"><path d="M0 0H5.6L7 2.4H14V12H0Z" fill="#deb06f"/><rect x="2" y="4.4" width="10" height="5.6" fill="#474c50"/><circle cx="4.9" cy="7.2" r="1.7" fill="#6db5dd"/></svg>
<div class="t" style="left:140.5px;top:192.95px;font-size:13.1px;color:#cecece;">com.reoy.sampleproject</div>
<div style="left:0px;top:209px;width:468px;height:19px;background:#04394f;"></div>
<svg style="left:143px;top:211.3px;" width="14" height="14" viewBox="0 0 14 14"><defs><radialGradient id="cg2" cx="0.5" cy="0.5" r="0.5"><stop offset="0.45" stop-color="#c3e8fa"/><stop offset="1" stop-color="#92d3f3"/></radialGradient></defs><circle cx="7" cy="7" r="7" fill="url(#cg2)"/><path d="M9.2 5.2Q8.4 4.5 7.2 4.5Q4.9 4.5 4.9 7Q4.9 9.5 7.2 9.5Q8.4 9.5 9.2 8.8" fill="none" stroke="#75676c" stroke-width="1.05"/></svg>
<svg style="left:161px;top:214px;" width="10" height="9" viewBox="0 0 10 9"><path d="M1 4.4V2.6Q1 0.6 2.8 0.6Q4.6 0.6 4.6 2.6V3.4" fill="none" stroke="#5fbf5f" stroke-width="1.1"/><rect x="2.4" y="3.6" width="7.2" height="5.2" rx="0.8" fill="#5fbf5f"/><path d="M4.6 5.2H7.4L6.5 6.2V7.6H5.5V6.2Z" fill="#0a3850"/></svg>
<div class="t" style="left:176.5px;top:212.70px;font-size:12.6px;color:#ffffff;">MainActivity</div>
<svg style="left:84px;top:233px;" width="8" height="9" viewBox="0 0 8 9"><path d="M0 0L8 4.5L0 9Z" fill="#bdbdbd"/></svg>
<svg style="left:103px;top:230.8px;" width="16" height="14" viewBox="0 0 16 14"><path d="M0 0H5.6L7 2.4H14V12H0Z" fill="#deb06f"/><rect x="2" y="4.4" width="10" height="5.6" fill="#474c50"/><rect x="7.6" y="6" width="8" height="7.6" fill="#4d5154"/><rect x="8.2" y="6.4" width="7" height="2" rx="0.6" fill="#f5c63c"/><rect x="8.2" y="8.8" width="7" height="2" rx="0.6" fill="#e0a820"/><rect x="8.2" y="11.2" width="7" height="2" rx="0.6" fill="#f5c63c"/></svg>
<div class="t" style="left:120.5px;top:230.95px;font-size:13.1px;color:#cecece;">res</div>
<svg style="left:104px;top:247.6px;" width="13" height="15" viewBox="0 0 13 15"><path d="M1 1H7.2L10 3.8V14H1Z" fill="none" stroke="#c4c4c4" stroke-width="1.9"/><path d="M7 1V4H10" fill="none" stroke="#c4c4c4" stroke-width="1"/><rect x="0" y="5" width="13" height="7.1" fill="#f8b85a"/><path d="M5.4 6.5L3.3 8.55L5.4 10.6M7.6 6.5L9.7 8.55L7.6 10.6" fill="none" stroke="#8f7a55" stroke-width="1.2"/></svg>
<div class="t" style="left:120.5px;top:249.95px;font-size:13.1px;color:#cecece;">AndroidManifest.xml</div>
<svg style="left:64px;top:271px;" width="8" height="9" viewBox="0 0 8 9"><path d="M0 0L8 4.5L0 9Z" fill="#bdbdbd"/></svg>
<svg style="left:83px;top:268.8px;" width="14" height="12" viewBox="0 0 14 12"><path d="M0 0H5.6L7 2.4H14V12H0Z" fill="#deb06f"/><rect x="2" y="4.4" width="10" height="5.6" fill="#474c50"/></svg>
<div class="t" style="left:100.5px;top:268.95px;font-size:13.1px;color:#cecece;">test</div>
<svg style="left:64px;top:286.2px;" width="11" height="15" viewBox="0 0 11 15"><path d="M0.75 0.75H7.4L10.25 3.6V14.25H0.75Z" fill="none" stroke="#bcbcbc" stroke-width="1.5"/><path d="M7.2 0.8V3.8H10.2" fill="none" stroke="#bcbcbc" stroke-width="1"/><rect x="3" y="6.5" width="5" height="1.1" fill="#3fa9d8"/><rect x="3" y="8.7" width="5" height="1.1" fill="#3fa9d8"/><rect x="3" y="10.9" width="5" height="1.1" fill="#3fa9d8"/></svg>
<div class="t" style="left:80.5px;top:287.95px;font-size:13.1px;color:#cecece;">.gitignore</div>
<svg style="left:64px;top:306.6px;" width="12" height="12" viewBox="0 0 12 12"><path d="M3.2 0H8V8.6Q8 12 4.4 12H0V9.4H3.8Q5.2 9.4 5.2 8V2.4H3.2Z" fill="#39a6d6"/><rect x="9.4" y="0" width="2.6" height="12" rx="0.8" fill="#39a6d6"/><circle cx="2" cy="5.8" r="2" fill="#f6a033"/></svg>
<div class="t" style="left:80.5px;top:306.95px;font-size:13.1px;color:#cecece;">app.iml</div>
<svg style="left:63px;top:324.6px;" width="14" height="14" viewBox="0 0 14 14"><path d="M12.6 8.6A5.8 5.8 0 1 1 5.2 1.5" fill="none" stroke="#9bd564" stroke-width="2.3"/><path d="M6.4 1.2A5.8 5.8 0 0 1 12.4 4.9" fill="none" stroke="#11a85c" stroke-width="2.3"/><circle cx="7" cy="7" r="2.7" fill="#11a85c"/></svg>
<div class="t" style="left:80.5px;top:325.95px;font-size:13.1px;color:#cecece;">build.gradle</div>
<svg style="left:64px;top:343.2px;" width="11" height="15" viewBox="0 0 11 15"><path d="M0.75 0.75H7.4L10.25 3.6V14.25H0.75Z" fill="none" stroke="#bcbcbc" stroke-width="1.5"/><path d="M7.2 0.8V3.8H10.2" fill="none" stroke="#bcbcbc" stroke-width="1"/><rect x="3" y="6.5" width="5" height="1.1" fill="#3fa9d8"/><rect x="3" y="8.7" width="5" height="1.1" fill="#3fa9d8"/><rect x="3" y="10.9" width="5" height="1.1" fill="#3fa9d8"/></svg>
<div class="t" style="left:80.5px;top:344.95px;font-size:13.1px;color:#cecece;letter-spacing:0.272px;">proguard-rules.pro</div>
<svg style="left:24px;top:366px;" width="8" height="9" viewBox="0 0 8 9"><path d="M0 0L8 4.5L0 9Z" fill="#bdbdbd"/></svg>
<svg style="left:43px;top:363.8px;" width="14" height="12" viewBox="0 0 14 12"><path d="M0 0H5.6L7 2.4H14V12H0Z" fill="#deb06f"/><rect x="2" y="4.4" width="10" height="5.6" fill="#474c50"/></svg>
<div class="t" style="left:60.5px;top:363.95px;font-size:13.1px;color:#cecece;">gradle</div>
<svg style="left:44px;top:381.2px;" width="11" height="15" viewBox="0 0 11 15"><path d="M0.75 0.75H7.4L10.25 3.6V14.25H0.75Z" fill="none" stroke="#bcbcbc" stroke-width="1.5"/><path d="M7.2 0.8V3.8H10.2" fill="none" stroke="#bcbcbc" stroke-width="1"/><rect x="3" y="6.5" width="5" height="1.1" fill="#3fa9d8"/><rect x="3" y="8.7" width="5" height="1.1" fill="#3fa9d8"/><rect x="3" y="10.9" width="5" height="1.1" fill="#3fa9d8"/></svg>
<div class="t" style="left:60.5px;top:382.95px;font-size:13.1px;color:#cecece;">.gitignore</div>
<svg style="left:43px;top:400.6px;" width="14" height="14" viewBox="0 0 14 14"><path d="M12.6 8.6A5.8 5.8 0 1 1 5.2 1.5" fill="none" stroke="#9bd564" stroke-width="2.3"/><path d="M6.4 1.2A5.8 5.8 0 0 1 12.4 4.9" fill="none" stroke="#11a85c" stroke-width="2.3"/><circle cx="7" cy="7" r="2.7" fill="#11a85c"/></svg>
<div class="t" style="left:60.5px;top:401.95px;font-size:13.1px;color:#cecece;">build.gradle</div>
<svg style="left:44px;top:419.2px;" width="11" height="15" viewBox="0 0 11 15"><path d="M0.75 0.75H7.4L10.25 3.6V14.25H0.75Z" fill="none" stroke="#bcbcbc" stroke-width="1.5"/><rect x="1" y="9" width="2.6" height="5" fill="#e34f45"/><rect x="4.2" y="7" width="2.6" height="7" fill="#f4c23a"/><rect x="7.4" y="9.6" width="2.6" height="4.4" fill="#6cc04a"/></svg>
<div class="t" style="left:60.5px;top:420.95px;font-size:13.1px;color:#cecece;">gradle.properties</div>
<svg style="left:44px;top:438.2px;" width="11" height="15" viewBox="0 0 11 15"><path d="M0.75 0.75H7.4L10.25 3.6V14.25H0.75Z" fill="none" stroke="#bcbcbc" stroke-width="1.5"/><path d="M7.2 0.8V3.8H10.2" fill="none" stroke="#bcbcbc" stroke-width="1"/><rect x="3" y="6.5" width="5" height="1.1" fill="#3fa9d8"/><rect x="3" y="8.7" width="5" height="1.1" fill="#3fa9d8"/><rect x="3" y="10.9" width="5" height="1.1" fill="#3fa9d8"/></svg>
<div class="t" style="left:60.5px;top:439.95px;font-size:13.1px;color:#cecece;">gradlew</div>
</div>
<div style="left:77px;top:569px;width:468px;height:1px;background:#393c3e;"></div>
<div style="left:77px;top:577px;width:468px;height:1px;background:#393c3e;"></div>
<div style="left:304px;top:572.5px;width:1px;height:1px;background:#9a9a9a;"></div>
<div style="left:305px;top:571.5px;width:1px;height:1px;background:#9a9a9a;"></div>
<div style="left:307px;top:572.5px;width:1px;height:1px;background:#9a9a9a;"></div>
<div style="left:308px;top:571.5px;width:1px;height:1px;background:#9a9a9a;"></div>
<div style="left:310px;top:572.5px;width:1px;height:1px;background:#9a9a9a;"></div>
<div style="left:311px;top:571.5px;width:1px;height:1px;background:#9a9a9a;"></div>
<div style="left:313px;top:572.5px;width:1px;height:1px;background:#9a9a9a;"></div>
<div style="left:314px;top:571.5px;width:1px;height:1px;background:#9a9a9a;"></div>
<div style="left:316px;top:572.5px;width:1px;height:1px;background:#9a9a9a;"></div>
<div style="left:317px;top:571.5px;width:1px;height:1px;background:#9a9a9a;"></div>
<!-- parts_variants -->
<div style="left:77px;top:578px;width:468px;height:22px;background:linear-gradient(#505457,#484c4e);"></div>
<div style="left:77px;top:600px;width:468px;height:1px;background:#393c3e;"></div>
<div class="t" style="left:82.5px;top:582.65px;font-size:11.7px;color:#999da0;letter-spacing:0.022px;">Build Variants</div>
<svg style="left:497px;top:582px;" width="20" height="14" viewBox="0 0 20 14"><rect x="10.80" y="5.80" width="2.4" height="2.4" transform="rotate(0 12.00 7.00)" fill="#b6b6b6"/><rect x="9.34" y="9.34" width="2.4" height="2.4" transform="rotate(45 10.54 10.54)" fill="#b6b6b6"/><rect x="5.80" y="10.80" width="2.4" height="2.4" transform="rotate(90 7.00 12.00)" fill="#b6b6b6"/><rect x="2.26" y="9.34" width="2.4" height="2.4" transform="rotate(135 3.46 10.54)" fill="#b6b6b6"/><rect x="0.80" y="5.80" width="2.4" height="2.4" transform="rotate(180 2.00 7.00)" fill="#b6b6b6"/><rect x="2.26" y="2.26" width="2.4" height="2.4" transform="rotate(225 3.46 3.46)" fill="#b6b6b6"/><rect x="5.80" y="0.80" width="2.4" height="2.4" transform="rotate(270 7.00 2.00)" fill="#b6b6b6"/><rect x="9.34" y="2.26" width="2.4" height="2.4" transform="rotate(315 10.54 3.46)" fill="#b6b6b6"/><circle cx="7" cy="7" r="4.2" fill="#b6b6b6"/><circle cx="7" cy="7" r="1.7" fill="#4d5154"/><path d="M15.2 6.1H20L17.6 8.9Z" fill="#b6b6b6"/></svg>
<svg style="left:525px;top:582px;" width="14" height="14" viewBox="0 0 14 14"><rect x="0.9" y="1.2" width="3" height="11.4" rx="0.6" fill="#b6b6b6"/><rect x="1.9" y="2.4" width="1" height="5.6" fill="#6b6e70"/><rect x="1.9" y="8.6" width="1" height="3" fill="#4d5154"/><path d="M5.4 4.7L8.6 2.2V4H13V5.4H8.6V7.2Z" fill="#b6b6b6"/></svg>
<div class="t" style="left:82.3px;top:612.45px;font-size:13.1px;color:#d6d6d6;-webkit-text-stroke:0.35px #d6d6d6;letter-spacing:0.773px;">Test Artifact:</div>
<div style="left:175px;top:607px;width:369.5px;height:23px;border:1px solid #6e7275;border-radius:3px;background:linear-gradient(#54585b,#4a4e51);"></div>
<div style="left:522px;top:608px;width:1px;height:21px;background:#6a6e71;"></div>
<div class="t" style="left:180.3px;top:611.95px;font-size:13.1px;color:#d6d6d6;-webkit-text-stroke:0.35px #d6d6d6;letter-spacing:0.676px;">Android Instrumentation Tests</div>
<svg style="left:528.5px;top:615px;" width="9" height="7" viewBox="0 0 9 7"><path d="M0 0H9L4.5 7Z" fill="#d0d0d0"/></svg>
<div style="left:77px;top:637px;width:468px;height:14px;background:linear-gradient(#575b5e,#45494c);border-bottom:1px solid #393c3e;"></div>
<div style="left:310px;top:638px;width:1px;height:12px;background:#35383a;"></div>
<div class="t" style="left:175.5px;top:639.35px;font-size:11.3px;color:#d4d4d4;letter-spacing:0.348px;">Module</div>
<div class="t" style="left:395px;top:639.35px;font-size:11.3px;color:#d4d4d4;letter-spacing:0.314px;">Build Variant</div>
<div style="left:311px;top:651px;width:232.8px;height:27px;background:#2a79d3;"></div>
<div style="left:310px;top:651px;width:1px;height:27px;background:#3a3d3f;"></div>
<div style="left:77px;top:678px;width:468px;height:1px;background:#393c3e;"></div>
<svg style="left:79px;top:658px;" width="16" height="14" viewBox="0 0 16 14"><path d="M0 0H5.6L7 2.4H14V12H0Z" fill="#deb06f"/><rect x="2" y="4.4" width="10" height="5.6" fill="#474c50"/><rect x="8" y="2.8" width="7" height="11" rx="1" fill="#c9c9c9"/><rect x="9.3" y="4.6" width="4.4" height="5.6" fill="#8cc43a"/><rect x="10.3" y="11.4" width="2.4" height="1" fill="#555"/></svg>
<div class="t" style="left:98.4px;top:657.95px;font-size:13.1px;color:#d4d4d4;letter-spacing:0.472px;">app</div>
<svg style="left:289px;top:658px;" width="14" height="14" viewBox="0 0 14 14"><defs><linearGradient id="ig" x1="0" y1="0" x2="0" y2="1"><stop offset="0" stop-color="#8fd0f2"/><stop offset="1" stop-color="#2f8fd0"/></linearGradient></defs><circle cx="7" cy="7" r="6.6" fill="url(#ig)" stroke="#2b7fb8" stroke-width="0.6"/><rect x="6.1" y="5.8" width="1.8" height="5" fill="#fff"/><circle cx="7" cy="3.7" r="1.1" fill="#fff"/></svg>
<div class="t" style="left:317.7px;top:657.95px;font-size:13.1px;color:#ffffff;-webkit-text-stroke:0.3px #fff;letter-spacing:0.068px;">debug</div>
<!-- parts_editor -->
<div style="left:546px;top:107px;width:140px;height:23px;background:#60666a;"></div>
<div style="left:686px;top:107px;width:1px;height:22px;background:#323537;"></div>
<div style="left:687px;top:107px;width:147px;height:22px;background:#4d5154;"></div>
<div style="left:834px;top:107px;width:1px;height:22px;background:#323537;"></div>
<div style="left:686px;top:129px;width:1269px;height:1px;background:#323537;"></div>
<div style="left:546px;top:130px;width:1409px;height:4px;background:#62676a;"></div>
<svg style="left:557px;top:111px;" width="14" height="14" viewBox="0 0 14 14"><defs><radialGradient id="cg3" cx="0.5" cy="0.5" r="0.5"><stop offset="0.45" stop-color="#c3e8fa"/><stop offset="1" stop-color="#92d3f3"/></radialGradient></defs><circle cx="7" cy="7" r="7" fill="url(#cg3)"/><path d="M9.2 5.2Q8.4 4.5 7.2 4.5Q4.9 4.5 4.9 7Q4.9 9.5 7.2 9.5Q8.4 9.5 9.2 8.8" fill="none" stroke="#75676c" stroke-width="1.05"/></svg>
<div class="t" style="left:575px;top:112.95px;font-size:12.1px;color:#d2d2d2;letter-spacing:-0.044px;">MainActivity.java</div>
<div class="t" style="left:668.6px;top:109.60px;font-size:15px;color:#8b8f91;">×</div>
<svg style="left:699px;top:109.6px;" width="13" height="15" viewBox="0 0 13 15"><path d="M1 1H7.2L10 3.8V14H1Z" fill="none" stroke="#c4c4c4" stroke-width="1.9"/><path d="M7 1V4H10" fill="none" stroke="#c4c4c4" stroke-width="1"/><rect x="0" y="5" width="13" height="7.1" fill="#f8b85a"/><path d="M5.4 6.5L3.3 8.55L5.4 10.6M7.6 6.5L9.7 8.55L7.6 10.6" fill="none" stroke="#8f7a55" stroke-width="1.2"/></svg>
<div class="t" style="left:716px;top:112.95px;font-size:12.1px;color:#d2d2d2;letter-spacing:0.078px;">content_main.xml</div>
<div class="t" style="left:817.6px;top:109.60px;font-size:15px;color:#8b8f91;">×</div>
<div style="left:546px;top:134px;width:1409px;height:907px;background:#383838;"></div>
<div style="left:546px;top:134px;width:50px;height:907px;background:linear-gradient(90deg,#414347 0,#414347 82%,#3b3c3f 100%);"></div>
<div style="left:597px;top:554px;width:1358px;height:15px;background:#414141;"></div>
<div style="left:1302px;top:134px;width:1px;height:907px;background:#5f5f5f;"></div>
<div style="left:596px;top:134px;width:1px;height:907px;background:#606366;"></div>
<div style="left:587px;top:554px;width:1px;height:195px;background:#5b918d;"></div>
<svg style="left:1942px;top:136px;" width="12" height="10" viewBox="0 0 12 10"><path d="M1 5L4.4 8.4L11 1.4" fill="none" stroke="#5cb85c" stroke-width="2.2"/></svg>
<div style="left:632px;top:254px;width:1px;height:150px;background:#4c4c4c;"></div>
<div style="left:660px;top:359px;width:1px;height:30px;background:#444444;"></div>
<div style="left:716px;top:374px;width:1px;height:15px;background:#444444;"></div>
<div style="left:632px;top:464px;width:1px;height:45px;background:#4c4c4c;"></div>
<div style="left:632px;top:569px;width:1px;height:165px;background:#4c4c4c;"></div>
<div style="left:660px;top:674px;width:1px;height:15px;background:#4c4c4c;"></div>
<div class="ln" style="left:535.3px;top:136px;">1</div>
<div class="c" style="left:602.2px;top:136px;"><span class="k">package </span>com.reoy.sampleproject<span class="k">;</span></div>
<div class="ln" style="left:535.3px;top:151px;">2</div>
<div class="ln" style="left:535.3px;top:166px;">3</div>
<div class="c" style="left:602.2px;top:166px;"><span class="k">import </span><span style="background:#474747;color:#9aa0a4;">...</span></div>
<div class="ln" style="left:535.3px;top:181px;">11</div>
<div class="ln" style="left:535.3px;top:196px;">12</div>
<div class="c" style="left:602.2px;top:196px;"><span class="k">public class </span>MainActivity <span class="k">extends </span>AppCompatActivity {</div>
<div class="ln" style="left:535.3px;top:211px;">13</div>
<div class="ln" style="left:535.3px;top:226px;">14</div>
<div class="c" style="left:602.2px;top:226px;">    <span class="an">@Override</span></div>
<div class="ln" style="left:535.3px;top:241px;">15</div>
<div class="c" style="left:602.2px;top:241px;">    <span class="k">protected void </span><span class="fn">onCreate</span>(Bundle savedInstanceState) {</div>
<div class="ln" style="left:535.3px;top:256px;">16</div>
<div class="c" style="left:602.2px;top:256px;">        <span class="k">super</span>.onCreate(savedInstanceState)<span class="k">;</span></div>
<div class="ln" style="left:535.3px;top:271px;">17</div>
<div class="c" style="left:602.2px;top:271px;">        setContentView(R.layout.<span class="f">activity_main</span>)<span class="k">;</span></div>
<div class="ln" style="left:535.3px;top:286px;">18</div>
<div class="c" style="left:602.2px;top:286px;">        Toolbar toolbar = (Toolbar) findViewById(R.id.<span class="f">toolbar</span>)<span class="k">;</span></div>
<div class="ln" style="left:535.3px;top:301px;">19</div>
<div class="c" style="left:602.2px;top:301px;">        setSupportActionBar(toolbar)<span class="k">;</span></div>
<div class="ln" style="left:535.3px;top:316px;">20</div>
<div class="ln" style="left:535.3px;top:331px;">21</div>
<div class="c" style="left:602.2px;top:331px;">        FloatingActionButton fab = (FloatingActionButton) findViewById(R.id.<span class="f">fab</span>)<span class="k">;</span></div>
<div class="ln" style="left:535.3px;top:346px;">22</div>
<div class="c" style="left:602.2px;top:346px;">        fab.setOnClickListener(<span style="background:#474747;color:#9aa0a4;">(view) → {</span></div>
<div class="ln" style="left:535.3px;top:361px;">25</div>
<div class="c" style="left:602.2px;top:361px;">                Snackbar.<span style="font-style:italic">make</span>(view<span class="k">, </span><span class="s">"Replace with your own action"</span><span class="k">, </span>Snackbar.<span class="f">LENGTH_LONG</span>)</div>
<div class="ln" style="left:535.3px;top:376px;">26</div>
<div class="c" style="left:602.2px;top:376px;">                        .setAction(<span class="s">"Action"</span><span class="k">, null</span>).show()<span class="k">;</span></div>
<div class="ln" style="left:535.3px;top:391px;">27</div>
<div class="c" style="left:602.2px;top:391px;">        <span style="background:#474747;color:#9aa0a4;">}</span>)<span class="k">;</span></div>
<div class="ln" style="left:535.3px;top:406px;">29</div>
<div class="c" style="left:602.2px;top:406px;">    }</div>
<div class="ln" style="left:535.3px;top:421px;">30</div>
<div class="ln" style="left:535.3px;top:436px;">31</div>
<div class="c" style="left:602.2px;top:436px;">    <span class="an">@Override</span></div>
<div class="ln" style="left:535.3px;top:451px;">32</div>
<div class="c" style="left:602.2px;top:451px;">    <span class="k">public boolean </span><span class="fn">onCreateOptionsMenu</span>(Menu menu) {</div>
<div class="ln" style="left:535.3px;top:466px;">33</div>
<div class="c" style="left:602.2px;top:466px;">        <span class="cm">// Inflate the menu; this adds items to the action bar if it is present.</span></div>
<div class="ln" style="left:535.3px;top:481px;">34</div>
<div class="c" style="left:602.2px;top:481px;">        getMenuInflater().inflate(R.menu.<span class="f">menu_main</span><span class="k">, </span>menu)<span class="k">;</span></div>
<div class="ln" style="left:535.3px;top:496px;">35</div>
<div class="c" style="left:602.2px;top:496px;">        <span class="k">return true;</span></div>
<div class="ln" style="left:535.3px;top:511px;">36</div>
<div class="c" style="left:602.2px;top:511px;">    }</div>
<div class="ln" style="left:535.3px;top:526px;">37</div>
<div class="ln" style="left:535.3px;top:541px;">38</div>
<div class="c" style="left:602.2px;top:541px;">    <span class="an">@Override</span></div>
<div class="ln" style="left:535.3px;top:556px;">39</div>
<div class="c" style="left:602.2px;top:556px;">    <span class="k">public boolean </span><span class="fn">onOptionsItemSelected</span>(MenuItem item) <span style="color:#ffef28;background:#3f5a48;">{</span></div>
<div class="ln" style="left:535.3px;top:571px;">40</div>
<div class="c" style="left:602.2px;top:571px;">        <span class="cm">// Handle action bar item clicks here. The action bar will</span></div>
<div class="ln" style="left:535.3px;top:586px;">41</div>
<div class="c" style="left:602.2px;top:586px;">        <span class="cm">// automatically handle clicks on the Home/Up button, so long</span></div>
<div class="ln" style="left:535.3px;top:601px;">42</div>
<div class="c" style="left:602.2px;top:601px;">        <span class="cm">// as you specify a parent activity in AndroidManifest.xml.</span></div>
<div class="ln" style="left:535.3px;top:616px;">43</div>
<div class="c" style="left:602.2px;top:616px;">        <span class="k">int </span>id = item.getItemId()<span class="k">;</span></div>
<div class="ln" style="left:535.3px;top:631px;">44</div>
<div class="ln" style="left:535.3px;top:646px;">45</div>
<div class="c" style="left:602.2px;top:646px;">        <span class="cm">//noinspection SimplifiableIfStatement</span></div>
<div class="ln" style="left:535.3px;top:661px;">46</div>
<div class="c" style="left:602.2px;top:661px;">        <span class="k">if </span>(id == R.id.<span class="f">action_settings</span>) {</div>
<div class="ln" style="left:535.3px;top:676px;">47</div>
<div class="c" style="left:602.2px;top:676px;">            <span class="k">return true;</span></div>
<div class="ln" style="left:535.3px;top:691px;">48</div>
<div class="c" style="left:602.2px;top:691px;">        }</div>
<div class="ln" style="left:535.3px;top:706px;">49</div>
<div class="ln" style="left:535.3px;top:721px;">50</div>
<div class="c" style="left:602.2px;top:721px;">        <span class="k">return super</span>.onOptionsItemSelected(item)<span class="k">;</span></div>
<div class="ln" style="left:535.3px;top:736px;">51</div>
<div class="c" style="left:602.2px;top:736px;">    <span style="color:#ffef28;background:#3f5a48;">}</span></div>
<div class="ln" style="left:535.3px;top:751px;">52</div>
<div class="c" style="left:602.2px;top:751px;">}</div>
<div class="ln" style="left:535.3px;top:766px;">53</div>
<svg style="left:570px;top:239px;" width="14" height="14" viewBox="0 0 14 14"><circle cx="5" cy="8" r="4" fill="#7fcdee"/><circle cx="5" cy="8" r="1.8" fill="none" stroke="#3b5666" stroke-width="1"/><path d="M10.5 13V2.2M8 4.6L10.5 1.6L13 4.6" fill="none" stroke="#ee7f77" stroke-width="1"/></svg>
<svg style="left:570px;top:449px;" width="14" height="14" viewBox="0 0 14 14"><circle cx="5" cy="8" r="4" fill="#7fcdee"/><circle cx="5" cy="8" r="1.8" fill="none" stroke="#3b5666" stroke-width="1"/><path d="M10.5 13V2.2M8 4.6L10.5 1.6L13 4.6" fill="none" stroke="#ee7f77" stroke-width="1"/></svg>
<svg style="left:570px;top:554px;" width="14" height="14" viewBox="0 0 14 14"><circle cx="5" cy="8" r="4" fill="#7fcdee"/><circle cx="5" cy="8" r="1.8" fill="none" stroke="#3b5666" stroke-width="1"/><path d="M10.5 13V2.2M8 4.6L10.5 1.6L13 4.6" fill="none" stroke="#ee7f77" stroke-width="1"/></svg>
<svg style="left:570px;top:344px;" width="14" height="14" viewBox="0 0 14 14"><circle cx="5" cy="8" r="4" fill="#62c462"/><rect x="4.4" y="5.6" width="1.2" height="3" fill="#2a4a2a"/><rect x="4.4" y="9.4" width="1.2" height="1.2" fill="#2a4a2a"/><path d="M10.5 13V2.2M8 4.6L10.5 1.6L13 4.6" fill="none" stroke="#ee7f77" stroke-width="1"/></svg>
<svg style="left:571px;top:194px;" width="13" height="15" viewBox="0 0 13 15"><path d="M1 1H7.2L10 3.8V14H1Z" fill="none" stroke="#c4c4c4" stroke-width="1.9"/><path d="M7 1V4H10" fill="none" stroke="#c4c4c4" stroke-width="1"/><rect x="0" y="5" width="13" height="7.1" fill="#f8b85a"/><path d="M5.4 6.5L3.3 8.55L5.4 10.6M7.6 6.5L9.7 8.55L7.6 10.6" fill="none" stroke="#8f7a55" stroke-width="1.2"/></svg>
<svg style="left:592px;top:167px;" width="9" height="9" viewBox="0 0 9 9"><rect x="0.5" y="0.5" width="8" height="8" fill="#383838" stroke="#7e8284"/><path d="M2.5 4.5H6.5M4.5 2.5V6.5" stroke="#b0b0b0" stroke-width="1"/></svg>
<svg style="left:592px;top:347px;" width="9" height="9" viewBox="0 0 9 9"><rect x="0.5" y="0.5" width="8" height="8" fill="#383838" stroke="#7e8284"/><path d="M2.5 4.5H6.5M4.5 2.5V6.5" stroke="#b0b0b0" stroke-width="1"/></svg>
<svg style="left:592px;top:243.4px;" width="9" height="10" viewBox="0 0 9 10"><path d="M0.5 0.5H8.5V5.5L4.5 9.5L0.5 5.5Z" fill="#383838" stroke="#7e8284"/><path d="M2.5 4H6.5" stroke="#b0b0b0" stroke-width="1"/></svg>
<svg style="left:592px;top:453.4px;" width="9" height="10" viewBox="0 0 9 10"><path d="M0.5 0.5H8.5V5.5L4.5 9.5L0.5 5.5Z" fill="#383838" stroke="#7e8284"/><path d="M2.5 4H6.5" stroke="#b0b0b0" stroke-width="1"/></svg>
<svg style="left:592px;top:558.4px;" width="9" height="10" viewBox="0 0 9 10"><path d="M0.5 0.5H8.5V5.5L4.5 9.5L0.5 5.5Z" fill="#383838" stroke="#7e8284"/><path d="M2.5 4H6.5" stroke="#b0b0b0" stroke-width="1"/></svg>
<svg style="left:592px;top:573.4px;" width="9" height="10" viewBox="0 0 9 10"><path d="M0.5 0.5H8.5V5.5L4.5 9.5L0.5 5.5Z" fill="#383838" stroke="#7e8284"/><path d="M2.5 4H6.5" stroke="#b0b0b0" stroke-width="1"/></svg>
<svg style="left:592px;top:406.5px;" width="9" height="10" viewBox="0 0 9 10"><path d="M0.5 9.5H8.5V4.5L4.5 0.5L0.5 4.5Z" fill="#383838" stroke="#7e8284"/><path d="M2.5 6H6.5" stroke="#b0b0b0" stroke-width="1"/></svg>
<svg style="left:592px;top:511.5px;" width="9" height="10" viewBox="0 0 9 10"><path d="M0.5 9.5H8.5V4.5L4.5 0.5L0.5 4.5Z" fill="#383838" stroke="#7e8284"/><path d="M2.5 6H6.5" stroke="#b0b0b0" stroke-width="1"/></svg>
<svg style="left:592px;top:601.5px;" width="9" height="10" viewBox="0 0 9 10"><path d="M0.5 9.5H8.5V4.5L4.5 0.5L0.5 4.5Z" fill="#383838" stroke="#7e8284"/><path d="M2.5 6H6.5" stroke="#b0b0b0" stroke-width="1"/></svg>
<svg style="left:592px;top:736.5px;" width="9" height="10" viewBox="0 0 9 10"><path d="M0.5 9.5H8.5V4.5L4.5 0.5L0.5 4.5Z" fill="#383838" stroke="#7e8284"/><path d="M2.5 6H6.5" stroke="#b0b0b0" stroke-width="1"/></svg>
<!-- parts_annot -->
<div style="left:34px;top:554px;width:542px;height:556px;border:6px solid #ff4124;border-radius:25px;"></div>
<svg style="left:624px;top:864px;" width="44" height="26" viewBox="0 0 44 26"><path d="M4 12.5H39.5M13.8 4.6L4 12.5L13.8 20.4" fill="none" stroke="#ff4124" stroke-width="1.7"/></svg>
<div class="t" style="left:665.2px;top:854.80px;font-size:44.6px;color:#ff4124;-webkit-text-stroke:0.8px #ff4124;letter-spacing:2.318px;">Build Variants</div>
</body></html>
